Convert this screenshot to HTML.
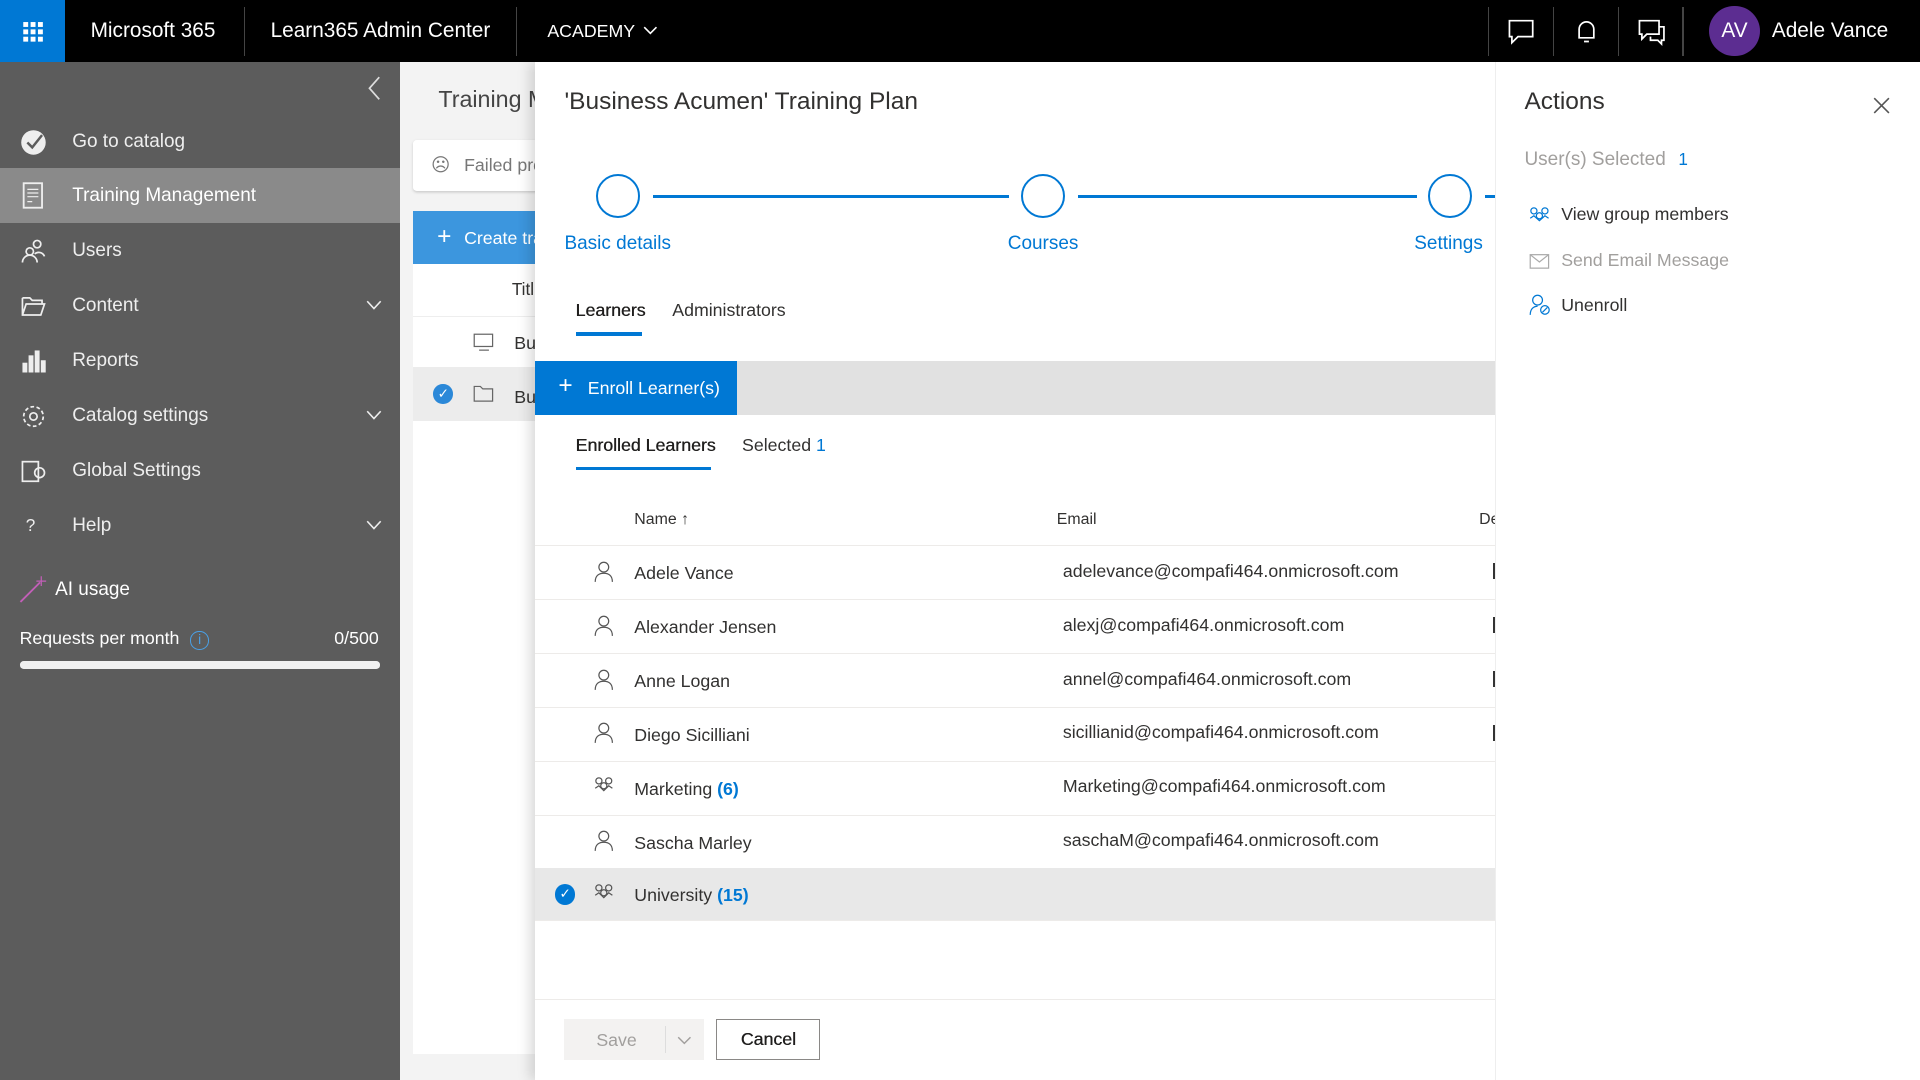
<!DOCTYPE html>
<html><head><meta charset="utf-8"><style>
*{box-sizing:border-box;margin:0;padding:0}
html,body{width:1920px;height:1080px;overflow:hidden;background:#f3f3f3}
#w{width:1568px;height:882px;zoom:1.22449;position:relative;font-family:"Liberation Sans",sans-serif;color:#323130;overflow:hidden}
.a{position:absolute}
.top{left:0;top:0;width:1568px;height:51px;background:#000;color:#fff}
.top .t{position:absolute;top:0;height:51px;line-height:51px;font-size:17px}
.sep{position:absolute;top:6px;width:1px;height:40px;background:#444}
.side{left:0;top:51px;width:327px;height:831px;background:#5c5c5c;color:#eee}
.ni{position:absolute;left:0;width:327px;height:45px;line-height:45px;font-size:15.5px;padding-left:59px}
.ni svg{position:absolute;left:16px;top:12px}
.ni svg.chev{left:auto;right:15px;top:18px;width:13px;height:9px}
.row{position:absolute;left:437px;width:784px;height:44px;border-bottom:1px solid #edebe9;font-size:14.5px}
.row .n{position:absolute;left:81px;top:14px}
.row .e{position:absolute;left:431px;top:12px}
.row svg{position:absolute;left:48px;top:12px}
.b{color:#0078d4;font-weight:bold}
.sb{font-weight:normal;color:#201f1e;text-shadow:0.3px 0 0 #201f1e}
</style></head><body><div id="w">
<div class="a top">
<div class="a" style="left:0;top:0;width:53px;height:51px;background:#0078d4">
<svg width="53" height="51"><g fill="#fff"><rect x="19" y="18" width="4" height="4"/><rect x="25" y="18" width="4" height="4"/><rect x="31" y="18" width="4" height="4"/><rect x="19" y="24" width="4" height="4"/><rect x="25" y="24" width="4" height="4"/><rect x="31" y="24" width="4" height="4"/><rect x="19" y="30" width="4" height="4"/><rect x="25" y="30" width="4" height="4"/><rect x="31" y="30" width="4" height="4"/></g></svg></div>
<div class="t" style="left:74px">Microsoft 365</div>
<div class="sep" style="left:199px"></div>
<div class="t" style="left:221px">Learn365 Admin Center</div>
<div class="sep" style="left:421px"></div>
<div class="t" style="left:447px;font-size:14.5px">ACADEMY</div>
<svg class="a" style="left:525px;top:21px" width="12" height="8" fill="none" stroke="#fff" stroke-width="1.3"><path d="M1 1l5 5 5-5"/></svg>
<div class="sep" style="left:1215px"></div><div class="sep" style="left:1268px"></div><div class="sep" style="left:1321px"></div><div class="sep" style="left:1374px"></div>
<svg class="a" style="left:1231px;top:14px" width="24" height="24" fill="none" stroke="#fff" stroke-width="1.4"><path d="M2 3h19v13H9l-5 5v-5H2z"/></svg>
<svg class="a" style="left:1285px;top:14px" width="24" height="24" fill="none" stroke="#fff" stroke-width="1.4"><path d="M5 17V10a6 6 0 0 1 12 0v7H5zM9 20h4"/></svg>
<svg class="a" style="left:1337px;top:14px" width="24" height="24" fill="none" stroke="#fff" stroke-width="1.4"><path d="M2 3h16v11H8l-4 4v-4H2zM18 8h4v11h-2v3l-3-3h-6v-3"/></svg>
<div class="a" style="left:1396px;top:5px;width:41px;height:41px;border-radius:50%;background:#5c2d91;text-align:center;line-height:41px;font-size:17px">AV</div>
<div class="t" style="left:1447px">Adele Vance</div>
</div>
<div class="a side">
<svg class="a" style="left:300px;top:11px" width="12" height="20" fill="none" stroke="#ddd" stroke-width="1.4"><path d="M10 1L2 10l8 9"/></svg>
<div class="ni" style="top:42px"><svg width="22" height="22"><circle cx="11" cy="11" r="10" fill="#eee"/><path d="M6 11l4 4 8-10" stroke="#5c5c5c" stroke-width="2" fill="none"/></svg>Go to catalog</div>
<div class="ni" style="top:86px;background:#8a8a8a;color:#fff"><svg width="22" height="22"><rect x="3" y="1" width="15" height="20" fill="none" stroke="#eee" stroke-width="1.5"/><path d="M6 6h9M6 9h9M6 12h9M6 16h4" stroke="#eee"/></svg>Training Management</div>
<div class="ni" style="top:131px"><svg width="22" height="22" fill="none" stroke="#eee" stroke-width="1.4"><circle cx="14" cy="5" r="3"/><circle cx="8" cy="11" r="3"/><path d="M2 20a6 6 0 0 1 12 0M12 13a5 5 0 0 1 8 2"/></svg>Users</div>
<div class="ni" style="top:176px"><svg width="22" height="22" fill="none" stroke="#eee" stroke-width="1.4"><path d="M2 4h6l2 2h8v3M2 4v14h15l3-9H5L2 18"/></svg>Content<svg class="chev" viewBox="0 0 13 9" fill="none" stroke="#eee" stroke-width="1.3"><path d="M1 1l5.5 6 5.5-6"/></svg></div>
<div class="ni" style="top:221px"><svg width="22" height="22" fill="#eee"><rect x="2" y="12" width="4" height="8"/><rect x="7" y="6" width="4" height="14"/><rect x="12" y="2" width="4" height="18"/><rect x="17" y="10" width="4" height="10"/></svg>Reports</div>
<div class="ni" style="top:266px"><svg width="22" height="22" fill="none" stroke="#eee" stroke-width="1.4"><circle cx="11" cy="11" r="3"/><circle cx="11" cy="11" r="8" stroke-dasharray="3 2"/></svg>Catalog settings<svg class="chev" viewBox="0 0 13 9" fill="none" stroke="#eee" stroke-width="1.3"><path d="M1 1l5.5 6 5.5-6"/></svg></div>
<div class="ni" style="top:311px"><svg width="22" height="22" fill="none" stroke="#eee" stroke-width="1.4"><rect x="2" y="3" width="13" height="16"/><circle cx="16" cy="12" r="4"/></svg>Global Settings</div>
<div class="ni" style="top:356px"><span class="a" style="left:21px;font-size:14px">?</span>Help<svg class="chev" viewBox="0 0 13 9" fill="none" stroke="#eee" stroke-width="1.3"><path d="M1 1l5.5 6 5.5-6"/></svg></div>
<svg class="a" style="left:15px;top:419px" width="24" height="24"><path d="M2 22L18 6" stroke="#c25fb8" stroke-width="1.5"/><path d="M19 1v8M15 5h8" stroke="#c25fb8"/></svg>
<div class="a" style="left:45px;top:422px;font-size:15.5px;color:#fff">AI usage</div>
<div class="a" style="left:16px;top:462px;font-size:14.5px;color:#fff">Requests per month <span style="display:inline-block;width:15px;height:15px;border:1px solid #4aa0e6;border-radius:50%;color:#4aa0e6;font-size:11px;text-align:center;line-height:13px;margin-left:5px">i</span></div>
<div class="a" style="left:273px;top:462px;font-size:14.5px;color:#fff">0/500</div>
<div class="a" style="left:16px;top:489px;width:294px;height:6px;border-radius:3px;background:#f0f0f0"></div>
</div>
<div class="a" style="left:358px;top:70px;font-size:19px;color:#444">Training M</div>
<div class="a" style="left:337px;top:114px;width:110px;height:42px;background:#fff;border-radius:3px;box-shadow:0 1px 2px #ccc"><span class="a" style="left:15px;top:12px;font-size:15px;color:#777">&#9785;</span><span class="a" style="left:42px;top:13px;font-size:14.5px;color:#777">Failed pro</span></div>
<div class="a" style="left:337px;top:172px;width:110px;height:44px;background:#3c96de;color:#fff;font-size:14.5px"><span class="a" style="left:20px;top:10px;font-size:20px">+</span><span class="a" style="left:42px;top:14px">Create tra</span></div>
<div class="a" style="left:337px;top:216px;width:110px;height:645px;background:#fff"></div>
<div class="a" style="left:418px;top:228px;font-size:14px">Titl</div>
<div class="a" style="left:337px;top:258px;width:110px;height:1px;background:#eee"></div>
<svg class="a" style="left:386px;top:272px" width="18" height="16" fill="none" stroke="#666"><rect x="1" y="1" width="15" height="10"/><path d="M5 14h8"/></svg>
<div class="a" style="left:420px;top:272px;font-size:14.5px">Bu</div>
<div class="a" style="left:337px;top:300px;width:110px;height:44px;background:#ececec"></div>
<div class="a" style="left:354px;top:314px;width:16px;height:16px;border-radius:50%;background:#2b88d8;color:#fff;font-size:11px;text-align:center;line-height:16px">&#10003;</div>
<svg class="a" style="left:386px;top:314px" width="18" height="16" fill="none" stroke="#666"><path d="M1 2h5l2 2h8v10H1z"/></svg>
<div class="a" style="left:420px;top:316px;font-size:14.5px">Bu</div>
<div class="a" style="left:437px;top:51px;width:784px;height:831px;background:#fff;box-shadow:-4px 0 10px rgba(0,0,0,.15)"></div>
<div class="a" style="left:461px;top:72px;font-size:20px;color:#323130">'Business Acumen' Training Plan</div>
<div class="a" style="left:533px;top:159px;width:291px;height:3px;background:#0078d4"></div>
<div class="a" style="left:880px;top:159px;width:277px;height:3px;background:#0078d4"></div>
<div class="a" style="left:1213px;top:159px;width:8px;height:3px;background:#0078d4"></div>
<div class="a" style="left:487px;top:142px;width:36px;height:36px;border:2px solid #0078d4;border-radius:50%"></div>
<div class="a" style="left:834px;top:142px;width:36px;height:36px;border:2px solid #0078d4;border-radius:50%"></div>
<div class="a" style="left:1166px;top:142px;width:36px;height:36px;border:2px solid #0078d4;border-radius:50%"></div>
<div class="a" style="left:461px;top:190px;font-size:15.5px;color:#0078d4">Basic details</div>
<div class="a" style="left:823px;top:190px;font-size:15.5px;color:#0078d4">Courses</div>
<div class="a" style="left:1155px;top:190px;font-size:15.5px;color:#0078d4">Settings</div>
<div class="a sb" style="left:470px;top:245px;font-size:14.5px">Learners</div>
<div class="a" style="left:470px;top:271px;width:54px;height:3px;background:#0078d4"></div>
<div class="a" style="left:549px;top:245px;font-size:14.5px">Administrators</div>
<div class="a" style="left:437px;top:295px;width:784px;height:44px;background:#e1e1e1"></div>
<div class="a" style="left:437px;top:295px;width:165px;height:44px;background:#0078d4;color:#fff;font-size:14.5px"><span class="a" style="left:19px;top:9px;font-size:20px">+</span><span class="a" style="left:43px;top:14px">Enroll Learner(s)</span></div>
<div class="a sb" style="left:470px;top:355px;font-size:14.5px">Enrolled Learners</div>
<div class="a" style="left:470px;top:381px;width:111px;height:3px;background:#0078d4"></div>
<div class="a" style="left:606px;top:355px;font-size:14.5px">Selected <span style="color:#0078d4">1</span></div>
<div class="a" style="left:518px;top:417px;font-size:13px">Name &#8593;</div>
<div class="a" style="left:863px;top:417px;font-size:13px">Email</div>
<div class="a" style="left:1208px;top:417px;font-size:13px">De</div>
<div class="a" style="left:437px;top:445px;width:784px;height:1px;background:#edebe9"></div>
<div class="row" style="top:446px"><svg width="16" height="18" fill="none" stroke="#555"><circle cx="8" cy="5" r="4"/><path d="M1 17c0-5 3-7 7-7s7 2 7 7"/></svg><span class="n">Adele Vance</span><span class="e">adelevance@compafi464.onmicrosoft.com</span></div>
<div class="row" style="top:490px"><svg width="16" height="18" fill="none" stroke="#555"><circle cx="8" cy="5" r="4"/><path d="M1 17c0-5 3-7 7-7s7 2 7 7"/></svg><span class="n">Alexander Jensen</span><span class="e">alexj@compafi464.onmicrosoft.com</span></div>
<div class="row" style="top:534px"><svg width="16" height="18" fill="none" stroke="#555"><circle cx="8" cy="5" r="4"/><path d="M1 17c0-5 3-7 7-7s7 2 7 7"/></svg><span class="n">Anne Logan</span><span class="e">annel@compafi464.onmicrosoft.com</span></div>
<div class="row" style="top:578px"><svg width="16" height="18" fill="none" stroke="#555"><circle cx="8" cy="5" r="4"/><path d="M1 17c0-5 3-7 7-7s7 2 7 7"/></svg><span class="n">Diego Sicilliani</span><span class="e">sicillianid@compafi464.onmicrosoft.com</span></div>
<div class="row" style="top:622px"><svg width="16" height="18" fill="none" stroke="#555"><circle cx="4" cy="4" r="2.5"/><circle cx="12" cy="4" r="2.5"/><circle cx="8" cy="8" r="2.5"/><path d="M1 10l3-2 4 4 4-4 3 2"/></svg><span class="n">Marketing <span class="b">(6)</span></span><span class="e">Marketing@compafi464.onmicrosoft.com</span></div>
<div class="row" style="top:666px"><svg width="16" height="18" fill="none" stroke="#555"><circle cx="8" cy="5" r="4"/><path d="M1 17c0-5 3-7 7-7s7 2 7 7"/></svg><span class="n">Sascha Marley</span><span class="e">saschaM@compafi464.onmicrosoft.com</span></div>
<div class="row" style="top:709px;background:#e8e8e8;height:43px"><div class="a" style="left:16px;top:13px;width:17px;height:17px;border-radius:50%;background:#0078d4;color:#fff;font-size:11px;text-align:center;line-height:17px">&#10003;</div><svg width="16" height="18" fill="none" stroke="#555"><circle cx="4" cy="4" r="2.5"/><circle cx="12" cy="4" r="2.5"/><circle cx="8" cy="8" r="2.5"/><path d="M1 10l3-2 4 4 4-4 3 2"/></svg><span class="n">University <span class="b">(15)</span></span></div>
<div class="a" style="left:1219px;top:460px;width:2px;height:13px;background:#333"></div>
<div class="a" style="left:1219px;top:504px;width:2px;height:13px;background:#333"></div>
<div class="a" style="left:1219px;top:548px;width:2px;height:13px;background:#333"></div>
<div class="a" style="left:1219px;top:592px;width:2px;height:13px;background:#333"></div>
<div class="a" style="left:437px;top:816px;width:784px;height:1px;background:#edebe9"></div>
<div class="a" style="left:461px;top:832px;width:114px;height:34px;background:#f3f2f1;color:#a19f9d;font-size:14.5px"><span class="a" style="left:26px;top:9px">Save</span><span class="a" style="left:82px;top:6px;width:1px;height:22px;background:#ddd"></span><svg class="a" style="left:92px;top:14px" width="12" height="8" fill="none" stroke="#a19f9d" stroke-width="1.2"><path d="M1 1l5 5 5-5"/></svg></div>
<div class="a sb" style="left:585px;top:832px;width:85px;height:34px;border:1px solid #8a8886;font-size:14.5px;text-align:center;line-height:32px">Cancel</div>
<div class="a" style="left:1221px;top:51px;width:347px;height:831px;background:#fff;border-left:1px solid #eee"></div>
<div class="a" style="left:1245px;top:72px;font-size:20px">Actions</div>
<svg class="a" style="left:1530px;top:79px" width="14" height="14" fill="none" stroke="#555" stroke-width="1.3"><path d="M1 1l12 12M13 1L1 13"/></svg>
<div class="a" style="left:1245px;top:122px;font-size:15.5px;color:#a19f9d">User(s) Selected <span style="color:#0078d4;margin-left:6px;font-size:14px">1</span></div>
<svg class="a" style="left:1249px;top:168px" width="18" height="16" fill="none" stroke="#0078d4"><circle cx="4" cy="4" r="2.5"/><circle cx="13" cy="4" r="2.5"/><circle cx="8.5" cy="8" r="2.5"/><path d="M1 10l3-2 4.5 4 4.5-4 3 2"/></svg>
<div class="a" style="left:1275px;top:167px;font-size:14.5px">View group members</div>
<svg class="a" style="left:1249px;top:205px" width="18" height="16" fill="none" stroke="#aaa"><rect x="1" y="3" width="15" height="11"/><path d="M1 3l7.5 6 7.5-6"/></svg>
<div class="a" style="left:1275px;top:204px;font-size:14.5px;color:#a19f9d">Send Email Message</div>
<svg class="a" style="left:1249px;top:240px" width="18" height="18" fill="none" stroke="#0078d4"><circle cx="7" cy="5" r="4"/><path d="M1 17c0-5 3-7 6-7"/><circle cx="13" cy="13" r="3.5"/><path d="M11 15l4-4"/></svg>
<div class="a" style="left:1275px;top:241px;font-size:14.5px">Unenroll</div>
</div></body></html>
